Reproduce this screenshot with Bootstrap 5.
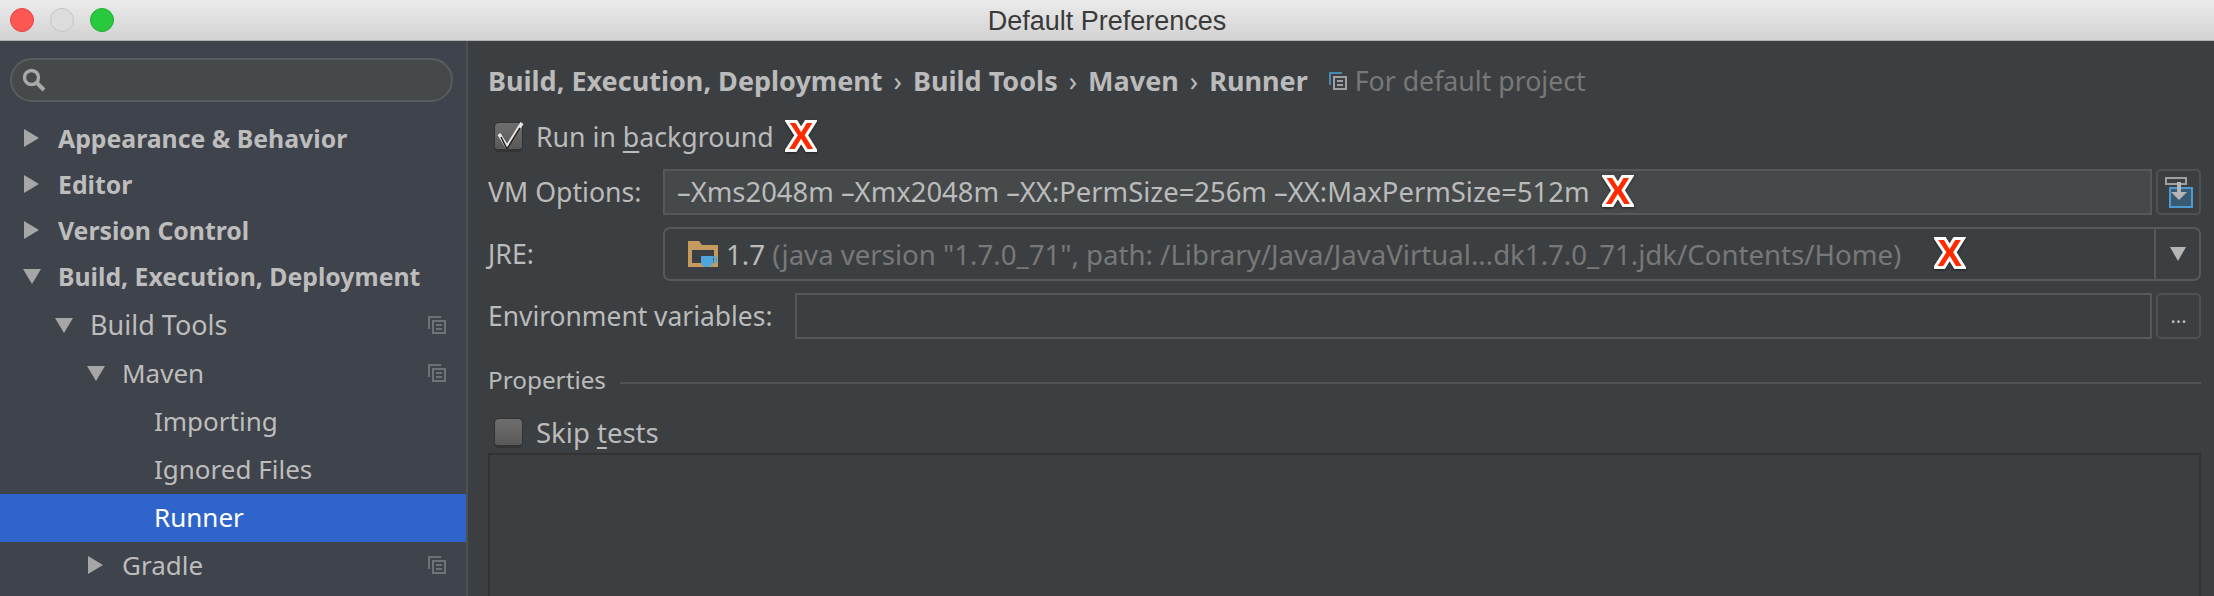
<!DOCTYPE html>
<html lang="en">
<head>
    <meta charset="UTF-8">
    <meta name="viewport" content="width=device-width, initial-scale=1">
    <title>Default Preferences</title>
    <link href="https://cdn.jsdelivr.net/npm/bootstrap@5.3.0/dist/css/bootstrap.min.css" rel="stylesheet">
    <style>
        html, body { height: 596px; overflow: hidden; }
        body { background: #3c3f41; color: #bbbbbb; font-family: "Noto Sans", "DejaVu Sans", sans-serif; font-size: 26.7px; line-height: 32px; }
        .title-bar { height: 41px; background: linear-gradient(#ebebeb, #d2d2d2); border-bottom: 1px solid #b0b0b0; position: relative; }
        .title-bar .title-text { font-family: "Liberation Sans", sans-serif; font-size: 27px; color: #3a3a3a; line-height: 42px; }
        .light { width: 24px; height: 24px; border-radius: 50%; position: absolute; top: 8px; }
        .light-red { left: 10px; background: #fc5753; border: 1px solid #df4744; }
        .light-gray { left: 50px; background: #dcdcdc; border: 1px solid #c4c4c4; }
        .light-green { left: 90px; background: #28c83f; border: 1px solid #1eb02f; }
        .main-area { height: 555px; }
        .side-pane { width: 466px; flex: none; background: #3f434b; }
        .pane-rule { width: 2px; flex: none; background: #4d5053; }
        .search-box { height: 44px; margin: 17px 13px 13px 10px; border: 2px solid #5a5d60; border-radius: 22px; background: #46494a; padding-left: 9px; }
        .tree-row { height: 46px; font-weight: 700; font-size: 24.8px; color: #bdbdbd; padding-right: 20px; }
        .tree-sub { height: 48px; font-weight: 400; font-size: 26px; padding-bottom: 2px; }
        .tree-first { margin-top: 3px; }
        .wide-name { font-size: 27px; }
        .tree-row.active-row { background: #2f65ca; color: #fff; }
        .twisty { width: 18px; flex: none; margin-right: 17px; }
        .lvl-0 { padding-left: 23px; }
        .lvl-1 { padding-left: 55px; }
        .lvl-2 { padding-left: 87px; }
        .lvl-3 { padding-left: 154px; }
        .content-pane { padding: 22px 13px 0 20px; min-width: 0; }
        .crumbs { height: 36px; font-weight: 700; font-size: 27px; color: #bbbbbb; }
        .crumbs .sep { font-weight: 400; margin: 0 11px; }
        .crumb-icon { margin-left: 21px; margin-right: 8px; }
        .crumb-note { color: #787878; font-weight: 400; font-size: 26.7px; }
        .check-row { height: 30px; }
        .fake-check { width: 29px; height: 30px; margin-left: 6px; margin-right: 13px; border-radius: 5px; background: linear-gradient(#6e6e6e, #595959); border: 1px solid #333; border-bottom: 3px solid #333; flex: none; }
        .check-mark { overflow: visible; }
        .under { text-decoration: underline; text-underline-offset: 4px; }
        .red-x { font-family: "Liberation Sans", sans-serif; font-weight: 700; font-size: 37px; line-height: 30px; color: #ff2a00; -webkit-text-stroke: 6px #fff; paint-order: stroke fill; flex: none; filter: drop-shadow(0 1px 1px rgba(0,0,0,.5)); }
        .x-near { margin-left: 15px; }
        .x-far { margin-left: 36px; }
        .field-label { flex: none; }
        .vm-label { width: 175px; }
        .env-label { width: 307px; font-size: 26.4px; }
        .field-line { height: 46px; border: 2px solid #565859; background: #3c3f41; }
        .field-fill { background: #45494a; padding-left: 12px; font-size: 27.4px; }
        .side-btn { width: 45px; flex: none; height: 46px; border: 2px solid #4f5254; border-radius: 5px; margin-left: 4px; }
        .more-btn { font-size: 20px; line-height: 20px; }
        .combo-box { height: 54px; border: 2px solid #565859; border-radius: 7px; font-size: 27.6px; }
        .combo-text { padding-left: 23px; }
        .combo-arrow { width: 45px; flex: none; border-left: 2px solid #565859; }
        .muted-text { color: #787878; }
        .props-label { font-size: 24.3px; }
        .group-rule { height: 2px; background: #515355; margin-top: 5px; margin-left: 14px; }
        .skip-label { font-size: 27.5px; }
        .gap-a { margin-top: 23px; }
        .gap-b { margin-top: 17px; }
        .gap-c { margin-top: 12px; }
        .gap-d { margin-top: 25px; }
        .gap-e { margin-top: 22px; }
        .props-box { border: 2px solid #323232; border-bottom: 0; height: 160px; margin-top: 5px; }
    </style>
</head>
<body>
    <div class="title-bar text-center">
        <span class="light light-red"></span>
        <span class="light light-gray"></span>
        <span class="light light-green"></span>
        <span class="title-text">Default Preferences</span>
    </div>
    <div class="main-area d-flex">
        <!-- tree -->
        <div class="side-pane">
            <div class="search-box d-flex align-items-center">
                <svg width="26" height="26" viewBox="0 0 26 26"><circle cx="10.5" cy="10.5" r="7" fill="none" stroke="#a9a9a9" stroke-width="3.4"/><path d="M15.5 15.5 L23 23" stroke="#a9a9a9" stroke-width="4"/></svg>
            </div>
            <div class="tree-row lvl-0 d-flex align-items-center"><svg class="twisty" width="18" height="18" viewBox="0 0 18 18"><path d="M1 0 L16 9 L1 18Z" fill="#a6a6a6"/></svg>Appearance &amp; Behavior</div>
            <div class="tree-row lvl-0 d-flex align-items-center"><svg class="twisty" width="18" height="18" viewBox="0 0 18 18"><path d="M1 0 L16 9 L1 18Z" fill="#a6a6a6"/></svg>Editor</div>
            <div class="tree-row lvl-0 d-flex align-items-center"><svg class="twisty" width="18" height="18" viewBox="0 0 18 18"><path d="M1 0 L16 9 L1 18Z" fill="#a6a6a6"/></svg>Version Control</div>
            <div class="tree-row lvl-0 d-flex align-items-center"><svg class="twisty" width="18" height="18" viewBox="0 0 18 18"><path d="M0 2 L18 2 L9 17Z" fill="#a6a6a6"/></svg>Build, Execution, Deployment</div>
            <div class="tree-row tree-sub tree-first wide-name lvl-1 d-flex align-items-center"><svg class="twisty" width="18" height="18" viewBox="0 0 18 18"><path d="M0 2 L18 2 L9 17Z" fill="#a6a6a6"/></svg><span class="flex-grow-1">Build Tools</span><svg width="18" height="18" viewBox="0 0 18 18" fill="none" stroke="#6f7275" stroke-width="2"><path d="M13 1H1V13"/><rect x="5" y="5" width="12" height="12"/><path d="M8 9h6M8 13h6"/></svg></div>
            <div class="tree-row tree-sub lvl-2 d-flex align-items-center"><svg class="twisty" width="18" height="18" viewBox="0 0 18 18"><path d="M0 2 L18 2 L9 17Z" fill="#a6a6a6"/></svg><span class="flex-grow-1">Maven</span><svg width="18" height="18" viewBox="0 0 18 18" fill="none" stroke="#6f7275" stroke-width="2"><path d="M13 1H1V13"/><rect x="5" y="5" width="12" height="12"/><path d="M8 9h6M8 13h6"/></svg></div>
            <div class="tree-row tree-sub lvl-3 d-flex align-items-center">Importing</div>
            <div class="tree-row tree-sub lvl-3 d-flex align-items-center">Ignored Files</div>
            <div class="tree-row tree-sub lvl-3 active-row d-flex align-items-center">Runner</div>
            <div class="tree-row tree-sub lvl-2 d-flex align-items-center"><svg class="twisty" width="18" height="18" viewBox="0 0 18 18"><path d="M1 0 L16 9 L1 18Z" fill="#a6a6a6"/></svg><span class="flex-grow-1">Gradle</span><svg width="18" height="18" viewBox="0 0 18 18" fill="none" stroke="#6f7275" stroke-width="2"><path d="M13 1H1V13"/><rect x="5" y="5" width="12" height="12"/><path d="M8 9h6M8 13h6"/></svg></div>
        </div>
        <div class="pane-rule"></div>
        <!-- settings -->
        <div class="content-pane flex-grow-1">
            <div class="crumbs d-flex align-items-center">
                Build, Execution, Deployment<span class="sep">›</span>Build Tools<span class="sep">›</span>Maven<span class="sep">›</span>Runner
                <svg class="crumb-icon" width="18" height="18" viewBox="0 0 18 18" fill="none" stroke-width="2"><path d="M13 1H1V13" stroke="#4c87ad"/><rect x="5" y="5" width="12" height="12" stroke="#a0a0a0"/><path d="M8 9h6M8 13h6" stroke="#a0a0a0"/></svg>
                <span class="crumb-note">For default project</span>
            </div>
            <div class="check-row d-flex align-items-center gap-a">
                <span class="fake-check d-flex align-items-center justify-content-center">
                    <svg class="check-mark" width="27" height="26" viewBox="0 0 27 26"><path d="M4 11 L12 24 L27 0" fill="none" stroke="#e8e8e8" stroke-width="3.5"/><path d="M6 14 L12 26 L25 5" fill="none" stroke="#222" stroke-width="1.6"/></svg>
                </span>
                Run in&nbsp;<span class="under">b</span>ackground
                <span class="red-x x-near">X</span>
            </div>
            <div class="d-flex align-items-center gap-b">
                <span class="field-label vm-label">VM Options:</span>
                <div class="field-line field-fill flex-grow-1 d-flex align-items-center">
                    –Xms2048m –Xmx2048m –XX:PermSize=256m –XX:MaxPermSize=512m
                    <span class="red-x ms-3">X</span>
                </div>
                <div class="side-btn d-flex align-items-center justify-content-center">
                    <svg width="28" height="32" viewBox="0 0 28 32"><rect x="5" y="12" width="22" height="19" fill="#3a5a72" stroke="#4b9bd0" stroke-width="2"/><path d="M1 2h20v6H1z" fill="none" stroke="#a0a0a0" stroke-width="2"/><path d="M12 6v10h-6l8 8 8-8h-6V6z" fill="#b5b5b5"/></svg>
                </div>
            </div>
            <div class="d-flex align-items-center gap-c">
                <span class="field-label vm-label">JRE:</span>
                <div class="combo-box flex-grow-1 d-flex align-items-stretch">
                    <div class="combo-text flex-grow-1 d-flex align-items-center">
                        <svg class="me-2" width="30" height="26" viewBox="0 0 30 26"><path d="M0 0h11l3 4h16v22H0z" fill="#c49a5e"/><rect x="4" y="9" width="22" height="13" fill="#3c3f41"/><path d="M13 15h12v6a5 5 0 0 1-5 5h-2a5 5 0 0 1-5-5z" fill="#4ea6dc"/><path d="M25 16.500h3v4h-3" fill="none" stroke="#4ea6dc" stroke-width="2"/></svg>
                        <span>1.7&nbsp;</span><span class="muted-text">(java version "1.7.0_71", path: /Library/Java/JavaVirtual...dk1.7.0_71.jdk/Contents/Home)</span>
                        <span class="red-x x-far">X</span>
                    </div>
                    <div class="combo-arrow d-flex align-items-center justify-content-center">
                        <svg width="16" height="14" viewBox="0 0 16 14"><path d="M0 0h16L8 14z" fill="#b5b5b5"/></svg>
                    </div>
                </div>
            </div>
            <div class="d-flex align-items-center gap-c">
                <span class="field-label env-label">Environment variables:</span>
                <div class="field-line flex-grow-1"></div>
                <div class="side-btn more-btn d-flex align-items-center justify-content-center">...</div>
            </div>
            <div class="d-flex align-items-center gap-d">
                <span class="props-label">Properties</span>
                <div class="group-rule flex-grow-1"></div>
            </div>
            <div class="check-row skip-label d-flex align-items-center gap-e">
                <span class="fake-check"></span>
                Skip&nbsp;<span class="under">t</span>ests
            </div>
            <div class="props-box"></div>
        </div>
    </div>
    <script src="https://cdn.jsdelivr.net/npm/bootstrap@5.3.0/dist/js/bootstrap.bundle.min.js"></script>
</body>
</html>
